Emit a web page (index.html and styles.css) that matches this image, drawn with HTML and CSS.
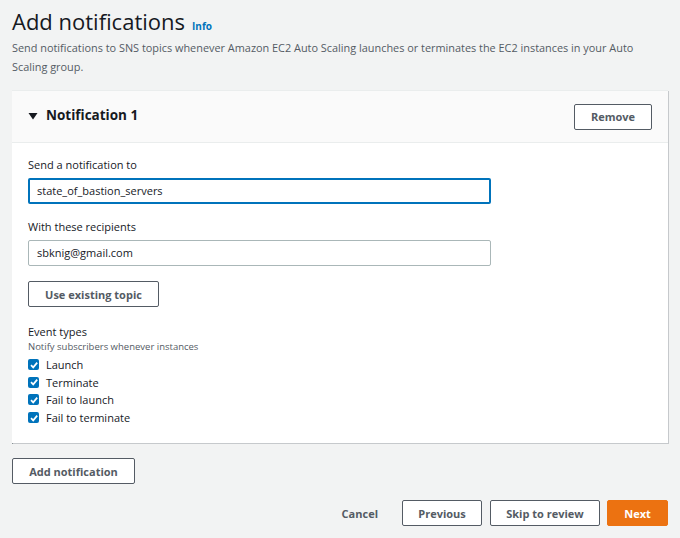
FILE: index.html
```html
<!DOCTYPE html>
<html>
<head>
<meta charset="utf-8">
<link rel="stylesheet" href="styles.css">
</head>
<body>
<div class="page">
  <div class="title-row">
    <h1 class="title">Add notifications</h1>
    <a class="info">Info</a>
  </div>
  <p class="desc">Send notifications to SNS topics whenever Amazon EC2 Auto Scaling launches or terminates the EC2 instances in your Auto Scaling group.</p>

  <div class="panel">
    <div class="panel-head">
      <div class="panel-title">
        <svg class="caret" width="10" height="8" viewBox="0 0 10 8"><path d="M0.5 1 L9.5 1 L5 7.5 Z" fill="#16191f"/></svg>
        <span>Notification 1</span>
      </div>
      <button class="btn btn-remove">Remove</button>
    </div>
    <div class="panel-body">
      <div class="field">
        <label class="label">Send a notification to</label>
        <div class="input focused">state_of_bastion_servers</div>
      </div>
      <div class="field">
        <label class="label">With these recipients</label>
        <div class="input">sbknig@gmail.com</div>
      </div>
      <button class="btn btn-topic">Use existing topic</button>
      <div class="events">
        <div class="label">Event types</div>
        <div class="hint">Notify subscribers whenever instances</div>
        <ul class="checks">
          <li><span class="cb"><svg width="10" height="10" viewBox="0 0 10 10"><path d="M2 5.2 L4.2 7.4 L8.2 2.6" stroke="#fff" stroke-width="1.7" fill="none"/></svg></span>Launch</li>
          <li><span class="cb"><svg width="10" height="10" viewBox="0 0 10 10"><path d="M2 5.2 L4.2 7.4 L8.2 2.6" stroke="#fff" stroke-width="1.7" fill="none"/></svg></span>Terminate</li>
          <li><span class="cb"><svg width="10" height="10" viewBox="0 0 10 10"><path d="M2 5.2 L4.2 7.4 L8.2 2.6" stroke="#fff" stroke-width="1.7" fill="none"/></svg></span>Fail to launch</li>
          <li><span class="cb"><svg width="10" height="10" viewBox="0 0 10 10"><path d="M2 5.2 L4.2 7.4 L8.2 2.6" stroke="#fff" stroke-width="1.7" fill="none"/></svg></span>Fail to terminate</li>
        </ul>
      </div>
    </div>
  </div>

  <button class="btn btn-add">Add notification</button>

  <div class="actions">
    <button class="link-btn">Cancel</button>
    <button class="btn btn-prev">Previous</button>
    <button class="btn btn-skip">Skip to review</button>
    <button class="btn btn-next">Next</button>
  </div>
</div>
</body>
</html>
```

FILE: styles.css
```css
* { box-sizing: border-box; }
html, body { margin: 0; padding: 0; }
body {
  background: #f2f3f3;
  font-family: "Open Sans", "Noto Sans", sans-serif;
  color: #16191f;
  width: 680px;
  height: 538px;
  overflow: hidden;
}
.page { padding: 8px 12px 0 12px; width: 680px; }
.title-row { display: flex; align-items: baseline; gap: 7px; }
.title {
  margin: 0;
  font-size: 22px;
  font-weight: 400;
  line-height: 26px;
  color: #16191f;
}
.info {
  font-size: 10px;
  font-weight: 700;
  color: #0073bb;
}
.desc {
  margin: 4px 0 0 0;
  font-size: 10.9px;
  line-height: 19px;
  color: #545b64;
  width: 640px;
}
.panel {
  margin-top: 14px;
  width: 656px;
  background: #fff;
  box-shadow: 1px 1px 0 #c6c9cc, 0 1px 0 #879196;
  border-top: 1px solid #eaeded;
}
.panel-head {
  height: 52px;
  background: #fafafa;
  border-bottom: 1px solid #eaeded;
  display: flex;
  align-items: center;
  justify-content: space-between;
  padding: 0 16px 0 16px;
}
.panel-title { display: flex; align-items: center; gap: 8px; font-size: 13.5px; font-weight: 700; margin-top: -3px; }
.caret { margin-top: 1px; }
.btn {
  font-family: inherit;
  background: #fff;
  border: 1px solid #545b64;
  border-radius: 2px;
  color: #545b64;
  font-weight: 700;
  font-size: 11px;
  height: 26px;
  padding: 0 8px;
  cursor: pointer;
  white-space: nowrap;
}
.btn-remove { width: 78px; }
.panel-body { padding: 13px 16px 17px 16px; }
.field { margin-bottom: 14px; }
.label { display: block; font-size: 11px; line-height: 18px; color: #16191f; }
.input {
  margin-top: 4px;
  width: 463px;
  height: 26px;
  border: 1px solid #aab7b8;
  border-radius: 2px;
  font-size: 11px;
  line-height: 24px;
  padding: 0 8px;
  color: #16191f;
}
.input.focused { border: 2px solid #0073bb; padding: 0 7px; line-height: 22px; }
.btn-topic { width: 131px; margin-top: 1px; }
.events { margin-top: 18px; }
.events .label { line-height: 14px; }
.hint { font-size: 9.5px; color: #545b64; line-height: 14px; margin-top: 1px; }
.checks { list-style: none; margin: 2px 0 0 0; padding: 0; }
.checks li { display: flex; align-items: center; gap: 7px; font-size: 11px; height: 17.6px; color: #16191f; }
.cb {
  width: 11px; height: 11px;
  background: #0073bb;
  border-radius: 2px;
  display: flex; align-items: center; justify-content: center;
}
.btn-add { margin-top: 15px; width: 123px; }
.actions {
  display: flex;
  justify-content: flex-end;
  align-items: center;
  gap: 8px;
  margin-top: 16px;
  width: 656px;
}
.actions .btn-skip { margin-right: -1px; }
.link-btn {
  font-family: inherit;
  background: none; border: none;
  color: #545b64; font-weight: 700; font-size: 11px;
  margin-right: 16px;
  padding: 0;
}
.btn-prev { width: 80px; }
.btn-skip { width: 110px; }
.btn-next { width: 61px; background: #ec7211; border-color: #ec7211; color: #fff; }
```
